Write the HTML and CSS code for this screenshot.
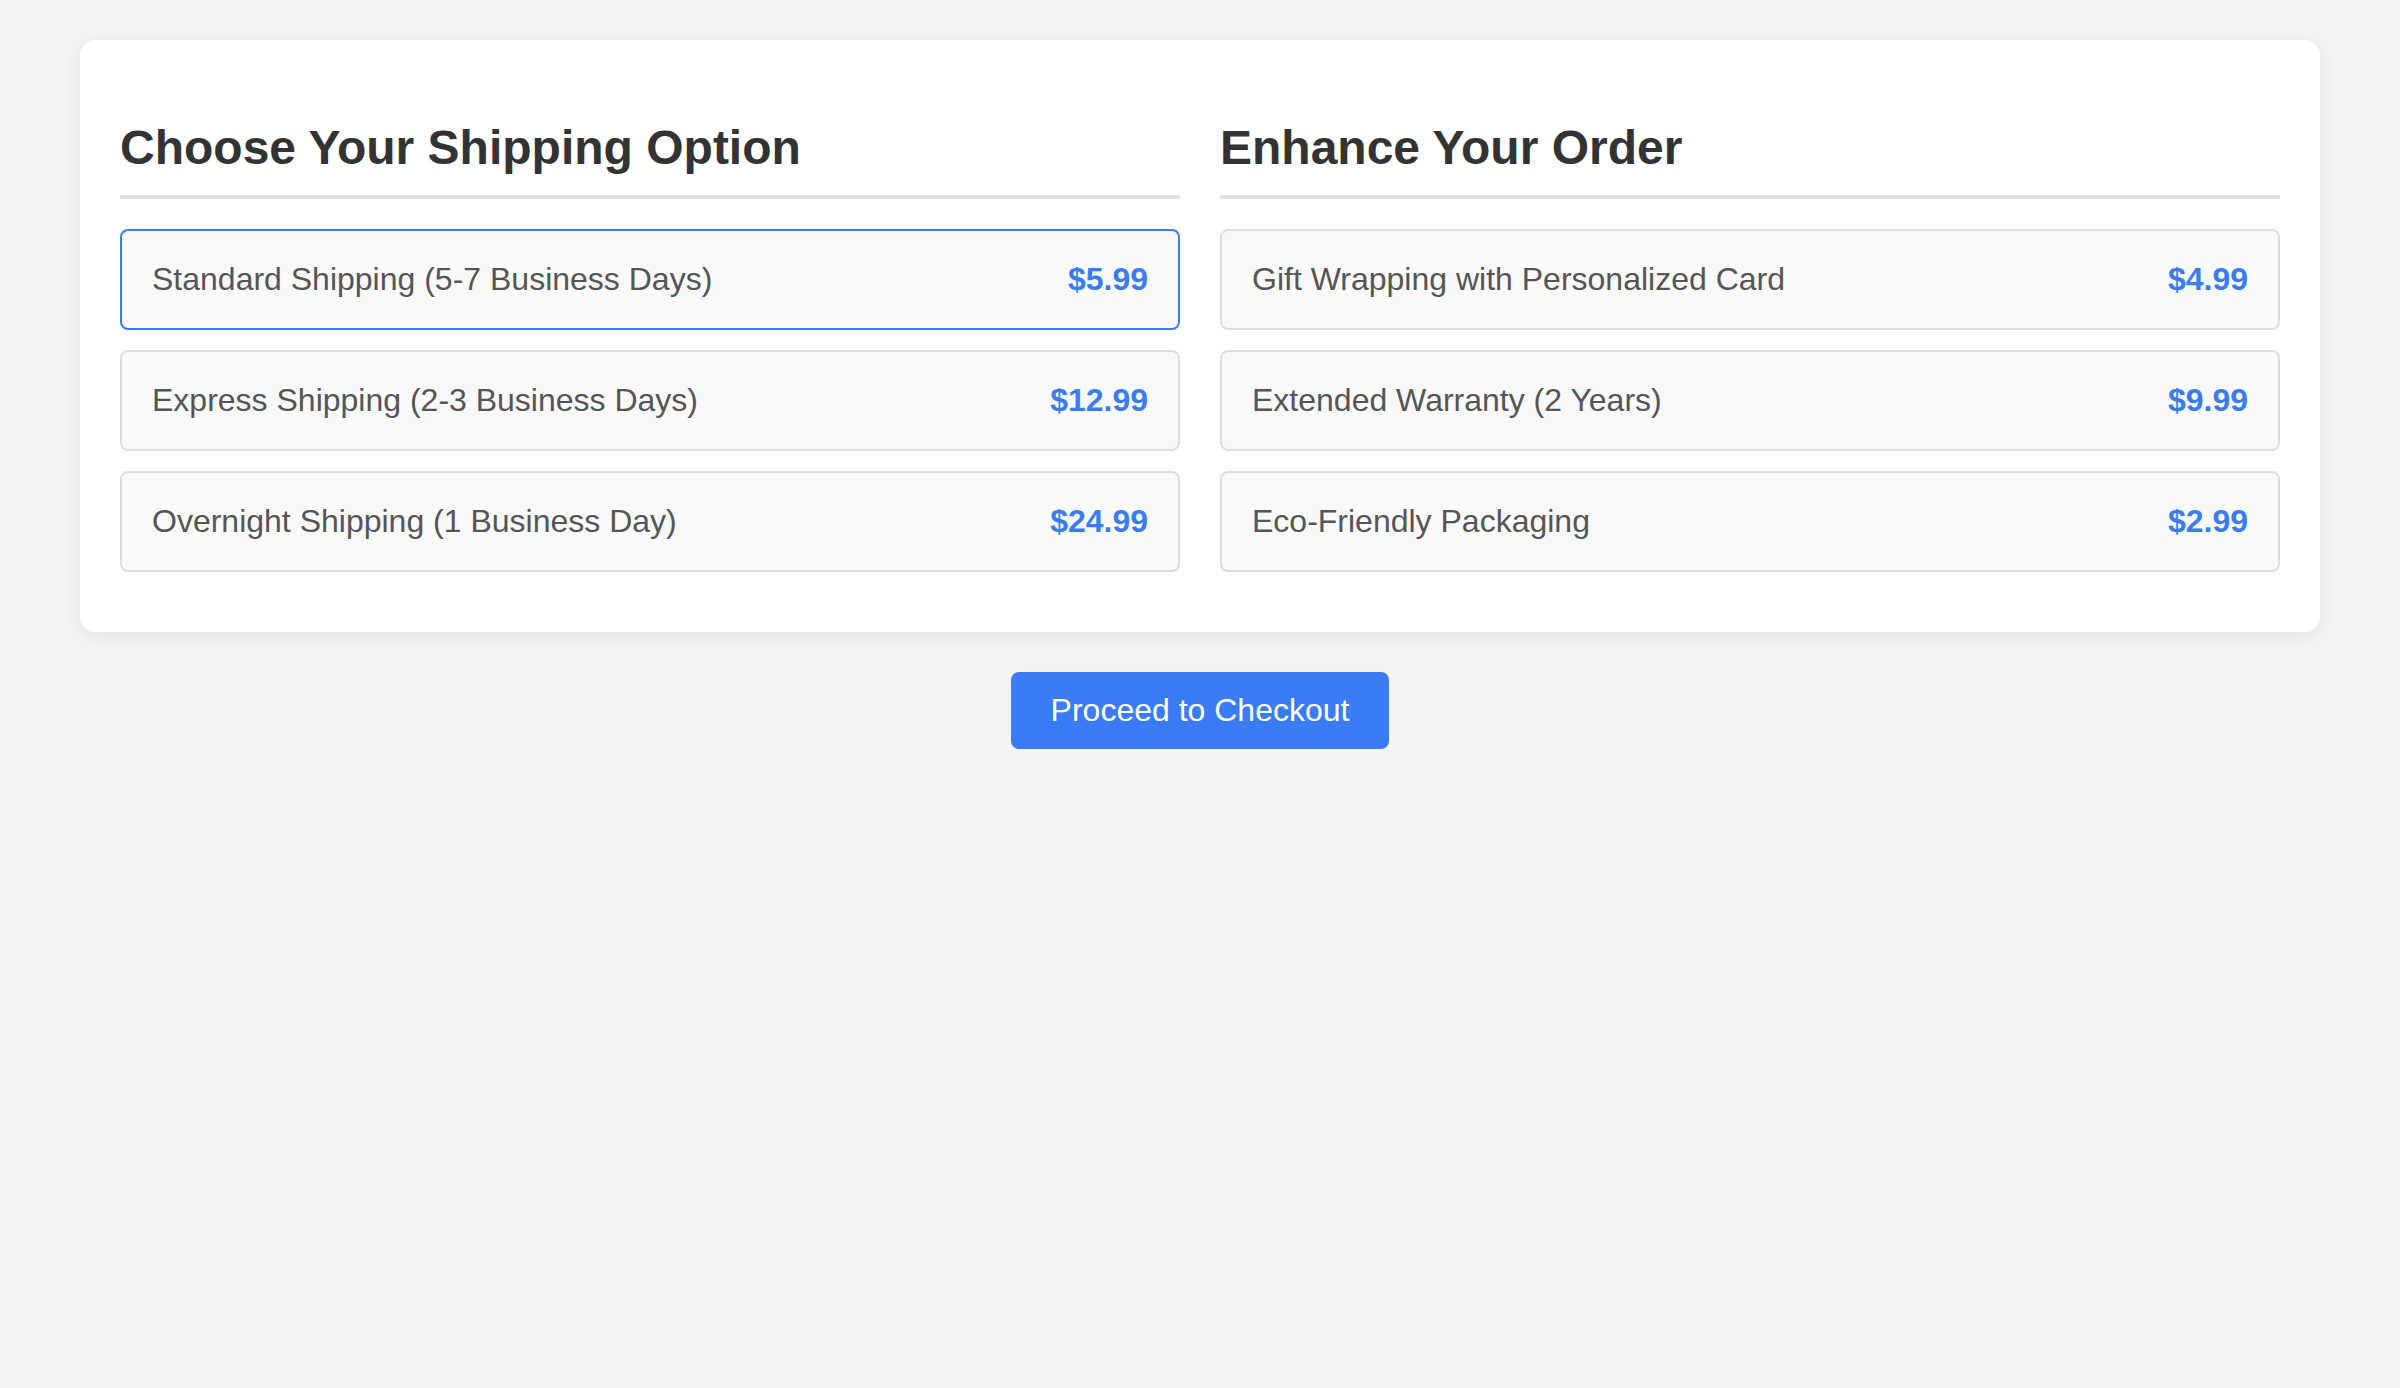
FILE: index.html
```html
<!DOCTYPE html>
<html lang="en">
<head>
<meta charset="utf-8">
<title>Shipping Options</title>
<link rel="stylesheet" href="styles.css">
</head>
<body>
  <div class="card">
    <section class="column">
      <h2 class="section-title">Choose Your Shipping Option</h2>
      <div class="option selected">
        <span class="label">Standard Shipping (5-7 Business Days)</span>
        <span class="price">$5.99</span>
      </div>
      <div class="option">
        <span class="label">Express Shipping (2-3 Business Days)</span>
        <span class="price">$12.99</span>
      </div>
      <div class="option">
        <span class="label">Overnight Shipping (1 Business Day)</span>
        <span class="price">$24.99</span>
      </div>
    </section>
    <section class="column">
      <h2 class="section-title">Enhance Your Order</h2>
      <div class="option">
        <span class="label">Gift Wrapping with Personalized Card</span>
        <span class="price">$4.99</span>
      </div>
      <div class="option">
        <span class="label">Extended Warranty (2 Years)</span>
        <span class="price">$9.99</span>
      </div>
      <div class="option">
        <span class="label">Eco-Friendly Packaging</span>
        <span class="price">$2.99</span>
      </div>
    </section>
  </div>
  <div class="actions">
    <button class="checkout" type="button">Proceed to Checkout</button>
  </div>
</body>
</html>
```

FILE: styles.css
```css
html, body {
  margin: 0;
  padding: 0;
}

body {
  background: #f4f4f4;
  font-family: "Liberation Sans", Arial, sans-serif;
  color: #333;
  padding: 40px 80px;
}

.card {
  background: #ffffff;
  border-radius: 16px;
  box-shadow: 0 4px 20px rgba(0, 0, 0, 0.08);
  padding: 40px;
  display: grid;
  grid-template-columns: 1fr 1fr;
  column-gap: 40px;
}

.section-title {
  font-size: 48px;
  font-weight: bold;
  color: #333;
  margin: 39.84px 0 30px;
  padding-bottom: 20px;
  border-bottom: 4px solid #e0e0e0;
}

.option {
  display: flex;
  justify-content: space-between;
  align-items: center;
  background: #f9f9f9;
  border: 2px solid #dddddd;
  border-radius: 8px;
  padding: 30px;
  margin-bottom: 20px;
  font-size: 32px;
}

.option.selected {
  border-color: #3a7cf6;
}

.label {
  color: #555;
}

.price {
  color: #3a7cf6;
  font-weight: bold;
}

.actions {
  display: flex;
  justify-content: center;
  margin-top: 40px;
}

.checkout {
  background: #3a7cf6;
  color: #ffffff;
  border: none;
  border-radius: 8px;
  padding: 20px 40px;
  font-family: "Liberation Sans", Arial, sans-serif;
  font-size: 32px;
  line-height: normal;
  cursor: pointer;
}
```
